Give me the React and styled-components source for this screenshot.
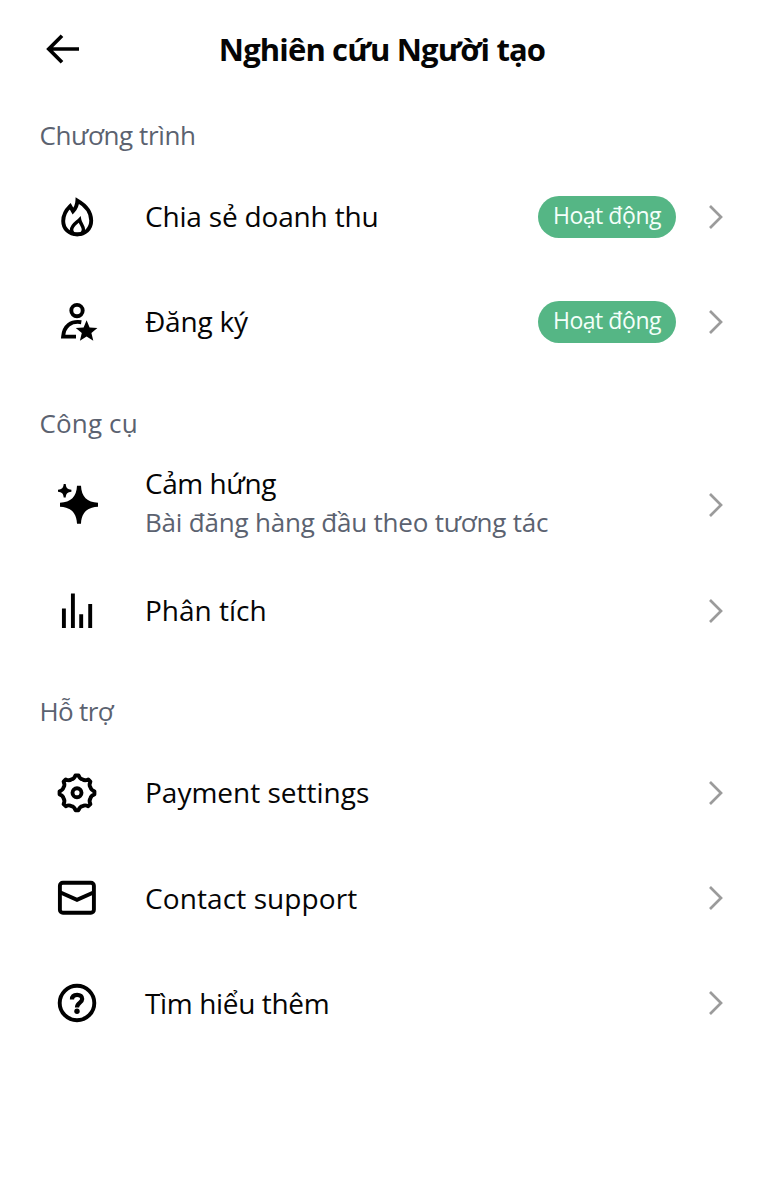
import styled, { createGlobalStyle } from "styled-components";

const GlobalStyle = createGlobalStyle`
  * {
    box-sizing: border-box;
  }
  body {
    margin: 0;
    background: #fff;
    font-family: "Open Sans", "Noto Sans", sans-serif;
  }
`;

const Page = styled.main`
  width: 764px;
  min-height: 1200px;
  background: #fff;
  color: #050505;
`;

const Header = styled.header`
  display: grid;
  grid-template-columns: 44px 1fr 44px;
  align-items: center;
  height: 98px;
  padding: 0 41px;
`;

const Title = styled.h1`
  margin: 0;
  text-align: center;
  font-size: 31px;
  line-height: 44px;
  font-weight: 700;
  white-space: nowrap;
  letter-spacing: -0.85px;
`;

const Section = styled.section`
  padding-top: ${(props) => props.$top}px;
`;

const SectionTitle = styled.h2`
  display: flex;
  align-items: center;
  height: 57px;
  margin: 0;
  padding: 0 0 ${(props) => props.$lift}px 39.5px;
  font-size: 26px;
  font-weight: 400;
  color: #5b6270;
  letter-spacing: ${(props) => props.$spacing || 0}px;
`;

const Row = styled.div`
  display: flex;
  align-items: center;
  height: 105.3px;
  padding: 0 40px 0 55px;
`;

const Icon = styled.svg`
  flex: none;
  width: 44px;
  height: 44px;
  fill: none;
  stroke: #000;
  stroke-width: 3.9;
`;

const Texts = styled.div`
  flex: 1;
  padding: 0 0 ${(props) => (props.$double ? 7 : 1)}px 46px;
  white-space: nowrap;
`;

const Label = styled.div`
  font-size: 28px;
  line-height: 40px;
  letter-spacing: ${(props) => props.$spacing || 0}px;
`;

const Detail = styled.div`
  font-size: 26px;
  line-height: 38px;
  color: #5b6270;
  letter-spacing: -0.2px;
`;

const Badge = styled.span`
  display: flex;
  align-items: center;
  justify-content: center;
  width: 138px;
  height: 42px;
  margin-right: 32px;
  padding-bottom: 3px;
  border-radius: 21px;
  background: #55b685;
  color: #f4fffa;
  font-size: 23px;
  white-space: nowrap;
  letter-spacing: -0.45px;
`;

const Chevron = styled.svg`
  flex: none;
  width: 16px;
  height: 26px;
  fill: none;
  stroke: #9b9b9b;
  stroke-width: 2.7;
`;

// eight flat teeth joined by scooped valleys
const point = (deg, r) => {
  const a = (deg * Math.PI) / 180;
  return `${(22 + r * Math.sin(a)).toFixed(2)} ${(21.8 - r * Math.cos(a)).toFixed(2)}`;
};
const gear =
  [0, 45, 90, 135, 180, 225, 270, 315]
    .map((d) => `${d ? "L" : "M"}${point(d - 5, 17.5)}L${point(d + 5, 17.5)}Q${point(d + 11, 14.2)} ${point(d + 22.5, 14.5)}Q${point(d + 34, 14.2)} ${point(d + 40, 17.5)}`)
    .join("") + "Z";

const icons = {
  fire: (
    <>
      <path d="M22.4 5.6C30 10 36.2 17 36.2 25.6C36.2 34 30.2 39.3 22.2 39.3C14.2 39.3 8.2 34 8.2 26C8.2 19.8 11.3 15 15.2 11.2L18 16.2C20.6 13.4 22.2 10 22.4 5.6Z" />
      <path d="M24.6 24.6C21.5 27.8 16.6 30 16.6 34.8C16.6 38 19.2 39.6 22.4 39.6C26 39.6 28.4 37.8 28.4 34.6C28.4 31 25.4 29 24.6 24.6Z" strokeWidth="3.4" />
    </>
  ),
  subscriber: (
    <>
      <circle cx="22" cy="10.6" r="5.7" />
      <path d="M26.3 22.2C16 20.6 9 26 8.1 36.6H21" />
      <path
        d="M31.6 20.2L34.6 27.5L42.4 28L36.4 33.1L38.3 40.8L31.6 36.6L24.9 40.8L26.8 33.1L20.8 28L28.6 27.5Z"
        fill="#000"
        stroke="none"
      />
    </>
  ),
  sparkle: (
    <g fill="#000" stroke="none">
      <path d="M22 2.7H26C26.4 13.5 32.2 19.3 43 19.7V23.7C32.2 24.1 26.4 29.9 26 40.7H22C21.6 29.9 15.8 24.1 5 23.7V19.7C15.8 19.3 21.6 13.5 22 2.7Z" />
      <path d="M8.7 1H10.7C11 4.8 12.6 6.4 16.4 6.7V8.7C12.6 9 11 10.6 10.7 14.4H8.7C8.4 10.6 6.8 9 3 8.7V6.7C6.8 6.4 8.4 4.8 8.7 1Z" />
    </g>
  ),
  bars: <path d="M8.9 19.5V38.9M17.9 4.5V38.9M26.2 25.2V38.9M35.2 14.9V38.9" />,
  gear: (
    <>
      <path d={gear} strokeLinejoin="round" />
      <circle cx="22" cy="21.8" r="4.5" />
    </>
  ),
  mail: (
    <>
      <rect x="4.9" y="6.7" width="34" height="30" rx="3" />
      <path d="M5 16.2L22 23.8L39 16.2" />
    </>
  ),
  help: (
    <>
      <circle cx="22" cy="22" r="17.3" />
      <path d="M17 18.4C17 15.4 19 13.8 22.1 13.8C25.3 13.8 27.2 15.5 27.2 18C27.2 21.6 22 21.6 22 26.4" strokeWidth="4.2" />
      <circle cx="22" cy="30.3" r="2.7" fill="#000" stroke="none" />
    </>
  ),
};

const sections = [
  {
    title: "Chương trình",
    spacing: -0.38,
    top: 9,
    lift: 1.5,
    rows: [
      { icon: "fire", label: "Chia sẻ doanh thu", spacing: -0.18, badge: "Hoạt động" },
      { icon: "subscriber", label: "Đăng ký", spacing: -0.2, badge: "Hoạt động" },
    ],
  },
  {
    title: "Công cụ",
    spacing: 0.15,
    top: 21,
    lift: 3,
    rows: [
      { icon: "sparkle", label: "Cảm hứng", spacing: -0.45, detail: "Bài đăng hàng đầu theo tương tác" },
      { icon: "bars", label: "Phân tích" },
    ],
  },
  {
    title: "Hỗ trợ",
    spacing: -0.65,
    top: 20,
    lift: 1,
    rows: [
      { icon: "gear", label: "Payment settings" },
      { icon: "mail", label: "Contact support", spacing: 0.1 },
      { icon: "help", label: "Tìm hiểu thêm", spacing: -0.36 },
    ],
  },
];

function App() {
  return (
    <Page>
      <GlobalStyle />
      <Header>
        <Icon viewBox="0 0 44 44">
          <path d="M38 22H8M21 8.8L7.8 22L21 35.2" strokeWidth="3.7" />
        </Icon>
        <Title>Nghiên cứu Người tạo</Title>
      </Header>
      {sections.map((section) => (
        <Section key={section.title} $top={section.top}>
          <SectionTitle $spacing={section.spacing} $lift={section.lift}>
            {section.title}
          </SectionTitle>
          {section.rows.map((row) => (
            <Row key={row.label}>
              <Icon viewBox="0 0 44 44">{icons[row.icon]}</Icon>
              <Texts $double={Boolean(row.detail)}>
                <Label $spacing={row.spacing}>{row.label}</Label>
                {row.detail && <Detail>{row.detail}</Detail>}
              </Texts>
              {row.badge && <Badge>{row.badge}</Badge>}
              <Chevron viewBox="0 0 16 26">
                <path d="M2 2L13 13L2 24" />
              </Chevron>
            </Row>
          ))}
        </Section>
      ))}
    </Page>
  );
}

export default App;
